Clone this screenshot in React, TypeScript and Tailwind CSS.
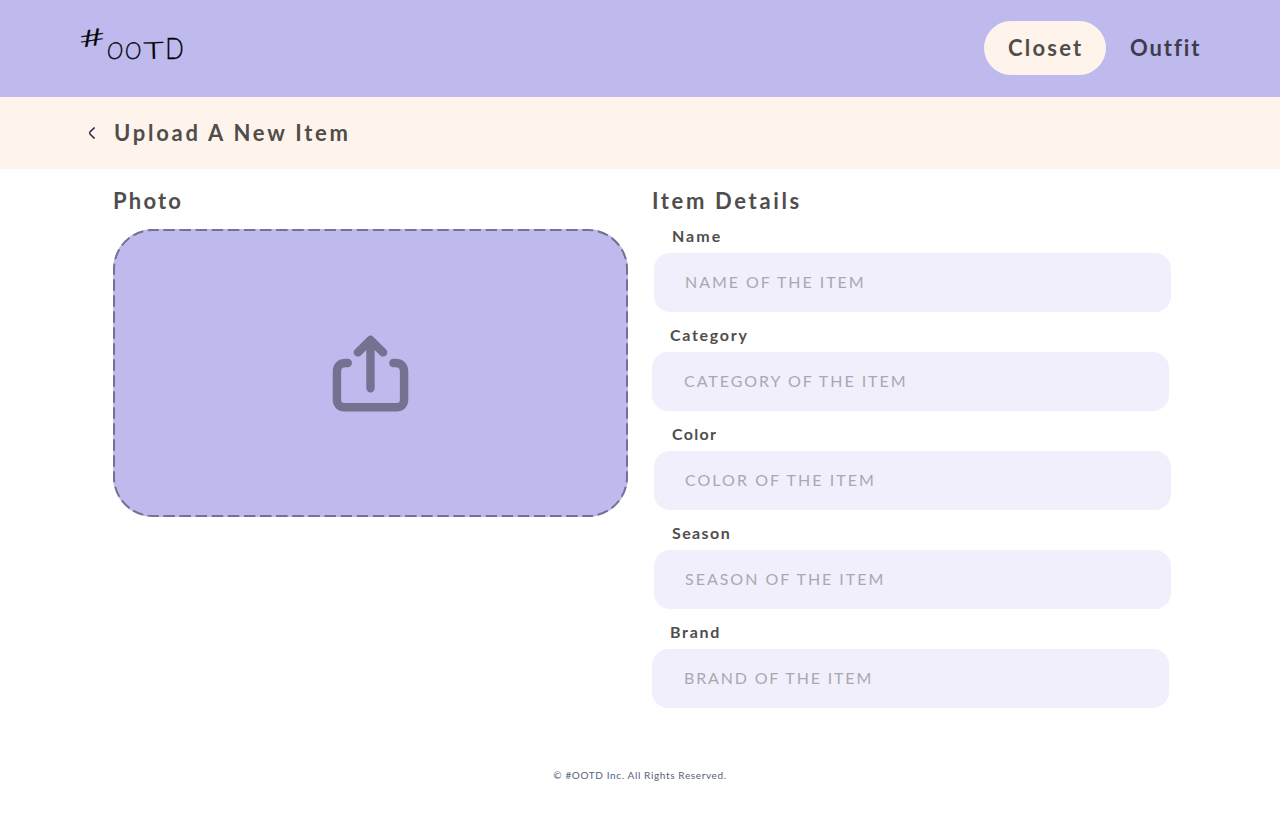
const heading = "whitespace-nowrap text-[22px] leading-8 font-bold text-[#4f4e4d]";

type Field = {
  label: string;
  hint: string;
  row: string;
  labelStyle: string;
  hintStyle: string;
};

const fields: Field[] = [
  { label: "Name", hint: "NAME OF THE ITEM", row: "ml-0.5", labelStyle: "pl-[18px] tracking-[2px]", hintStyle: "pl-[31px] tracking-[1.95px]" },
  { label: "Category", hint: "CATEGORY OF THE ITEM", row: "", labelStyle: "pl-[18px] tracking-[1.7px]", hintStyle: "pl-8 tracking-[1.95px]" },
  { label: "Color", hint: "COLOR OF THE ITEM", row: "ml-0.5", labelStyle: "pl-[18px] tracking-[1.3px]", hintStyle: "pl-[31px] tracking-[2.05px]" },
  { label: "Season", hint: "SEASON OF THE ITEM", row: "ml-0.5", labelStyle: "pl-[18px] tracking-[1.4px]", hintStyle: "pl-[31px] tracking-[1.98px]" },
  { label: "Brand", hint: "BRAND OF THE ITEM", row: "", labelStyle: "pl-[18px] tracking-[1.7px]", hintStyle: "pl-8 tracking-[1.84px]" },
];

function Logo() {
  return (
    <svg className="h-20 w-[160px] font-['Lato',sans-serif] font-light" viewBox="-20 -20 160 80" fill="#000" stroke="#000" strokeWidth=".3">
      <text fontSize="23" transform="translate(.8 25.8) rotate(-9) skewX(4) scale(2 1)">#</text>
      <text fontSize="23.4" transform="translate(26.3 36.8) skewX(-5) scale(.88 1)">O</text>
      <text fontSize="23.4" transform="translate(44.6 36.8) skewX(-3) scale(.89 1)">O</text>
      <text fontSize="23.4" transform="translate(63.8 37) rotate(-1.5) scale(1.5 1)">T</text>
      <text fontSize="29" transform="translate(85.3 36.8) scale(.84 1)">D</text>
    </svg>
  );
}

function UploadPanel() {
  return (
    <button type="button" aria-label="Upload photo" className="block h-72 w-[515px] rounded-[40px] bg-[#bfbaed]">
      <svg className="h-72 w-[515px]" viewBox="0 0 515 288" fill="none" stroke="#757191">
        <g strokeWidth="2">
          <path strokeDasharray="11.5 4.611" strokeDashoffset="5.75" d="M40 1H475M40 287H475" />
          <path strokeDasharray="11.4 4.6" strokeDashoffset="5.7" d="M1 40V248M514 40V248" />
          <path
            strokeDasharray="10.9 4.415"
            strokeDashoffset="5.45"
            d="M1 40A39 39 0 0 1 40 1M475 1A39 39 0 0 1 514 40M514 248A39 39 0 0 1 475 287M40 287A39 39 0 0 1 1 248"
          />
        </g>
        <g strokeWidth="8.4" strokeLinecap="round" strokeLinejoin="round">
          <path d="M257.5 159.2V111M244.8 123.4L257.5 111L270.2 123.4" />
          <path d="M234.8 134H232.9Q223.9 134 223.9 143V170.3Q223.9 178.3 231.9 178.3H283.1Q291.1 178.3 291.1 170.3V143Q291.1 134 282.1 134H280.4" />
        </g>
      </svg>
    </button>
  );
}

export default function App() {
  return (
    <div className="flex min-h-[832px] w-full flex-col bg-white font-['Lato',sans-serif]">
      <header className="flex h-[97px] items-start justify-between bg-[#bfbaed] pr-14 pl-[60px]">
        <a href="#home" aria-label="#OOTD" className="mt-0.5">
          <Logo />
        </a>
        <nav className="mt-[21px] flex">
          <a href="#closet" className="flex h-[54px] w-[122px] items-center rounded-full bg-[#fff4eb] pl-6">
            <span className={`${heading} tracking-[2.2px]`}>Closet</span>
          </a>
          <a href="#outfit" className="flex h-[54px] w-[118px] items-center pl-6">
            <span className="text-[22px] leading-8 font-bold tracking-[1.9px] whitespace-nowrap text-[#3e3b4b]">Outfit</span>
          </a>
        </nav>
      </header>

      <div className="flex h-[72px] items-center bg-[#fff4eb] pl-[88px]">
        <svg className="h-3 w-2" viewBox="0 0 8 12" fill="none" stroke="#35264f" strokeWidth="1.5" strokeLinecap="round">
          <path d="M6.2 .9L2.2 4.8Q1.2 6 2.2 7.2L6.2 11.1" />
        </svg>
        <h1 className={`${heading} ml-[18px] tracking-[2.75px]`}>Upload A New Item</h1>
      </div>

      <main className="flex pt-4 pl-[113px]">
        <section className="w-[515px]">
          <h2 className={`${heading} mb-3 tracking-[2.2px]`}>Photo</h2>
          <UploadPanel />
        </section>
        <section className="ml-6 w-[519px]">
          <h2 className={`${heading} tracking-[2.65px]`}>Item Details</h2>
          <form className="flex flex-col pt-[7px]">
            {fields.map((f) => (
              <label key={f.label} className={`mb-[11px] flex w-[517px] flex-col ${f.row}`}>
                <span className={`h-[29px] text-base leading-6 font-bold text-[#4f4e4d] ${f.labelStyle}`}>{f.label}</span>
                <span className={`flex h-[59px] items-center rounded-2xl bg-[#f1effb] pb-0.5 text-base whitespace-nowrap text-[#aaa8ae] ${f.hintStyle}`}>{f.hint}</span>
              </label>
            ))}
          </form>
        </section>
      </main>

      <footer className="mt-12 text-center text-[10px] leading-4 tracking-[.63px] text-[#55627a]">
        © #OOTD Inc. All Rights Reserved.
      </footer>
    </div>
  );
}
